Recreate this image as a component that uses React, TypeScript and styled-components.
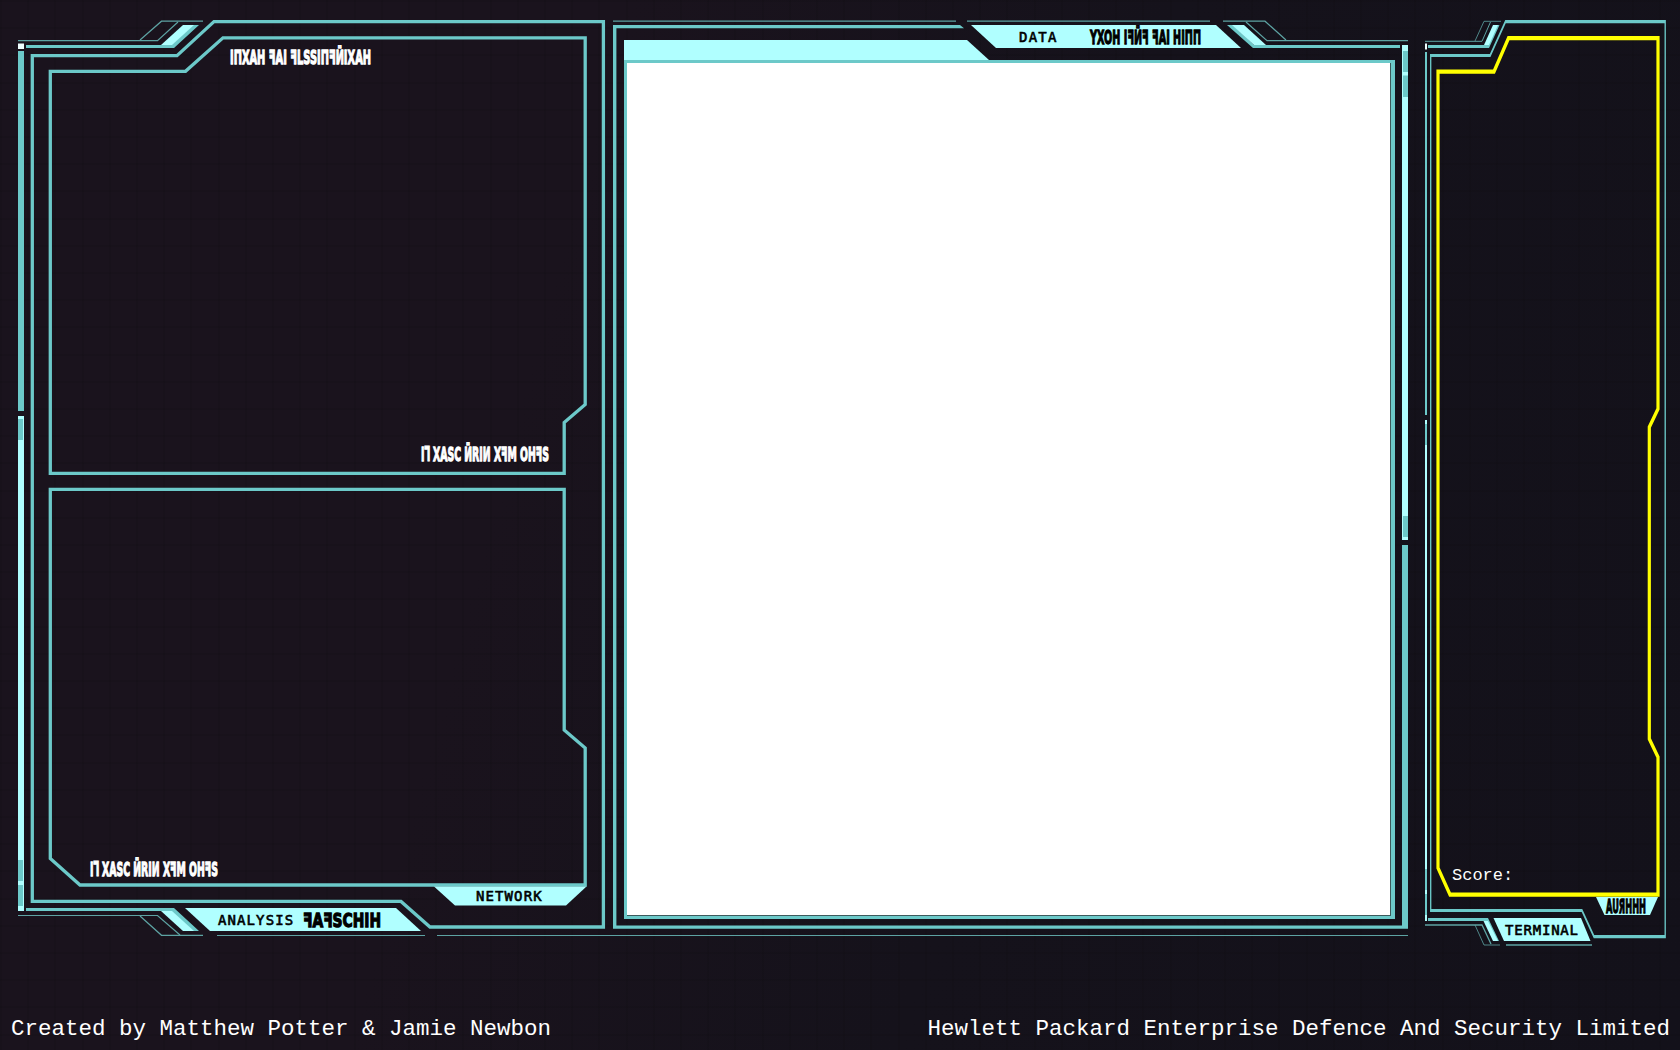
import React from "react";
import styled, { createGlobalStyle } from "styled-components";

const TEAL = "#6cc9c9";
const LIGHT = "#b0ffff";
const THIN = "#5da3a3";
const YELLOW = "#ffff00";

const GlobalStyle = createGlobalStyle`
  body {
    margin: 0;
    overflow: hidden;
    background-color: #16121b;
  }
`;

const Page = styled.div`
  display: flex;
  flex-direction: column;
  width: 1680px;
  height: 1050px;
  color: #fff;
  font-family: "Liberation Mono", monospace;
  background:
    repeating-linear-gradient(90deg, rgba(0, 0, 0, 0.07) 0 2px, transparent 2px 27.2px),
    repeating-linear-gradient(180deg, rgba(0, 0, 0, 0.07) 0 2px, transparent 2px 27.2px),
    linear-gradient(105deg, #1a131d 0%, #1a131d 32%, #15121b 60%, #13111a 100%);
`;

const Deck = styled.main`
  display: grid;
  grid-template-columns: 595px 800px 269px;
  height: 960px;
  padding-left: 16px;
`;

const Panel = styled.section`
  display: grid;
  min-width: 0;
`;

const Chrome = styled.svg`
  grid-area: 1 / 1;
  width: 100%;
  height: 960px;
  overflow: visible;
`;

const Content = styled.div<{ $top?: number }>`
  grid-area: 1 / 1;
  display: flex;
  flex-direction: column;
  align-items: flex-start;
  z-index: 1;
  padding-top: ${(p) => p.$top ?? 0}px;
`;

const UpperPane = styled.div`
  box-sizing: border-box;
  display: flex;
  flex-direction: column;
  justify-content: space-between;
  width: 100%;
  height: 482px;
  padding: 49px 62px 20px 214px;

  > :last-child {
    align-self: flex-end;
  }
`;

const LowerPane = styled.div`
  box-sizing: border-box;
  display: flex;
  align-items: flex-end;
  width: 100%;
  height: 404px;
  padding: 0 0 9px 74px;
`;

const Tab = styled.div<{ $left: number; $height: number; $top?: number; $gap?: number }>`
  display: flex;
  align-items: center;
  gap: ${(p) => p.$gap ?? 0}px;
  height: ${(p) => p.$height}px;
  margin: ${(p) => p.$top ?? 0}px 0 0 ${(p) => p.$left}px;
  color: #000;
`;

const TabLabel = styled.span<{ $width: number; $spacing: number }>`
  width: ${(p) => p.$width}px;
  white-space: nowrap;
  font: 14px/16px "DejaVu Sans Mono", monospace;
  -webkit-text-stroke: 0.6px #000;
  letter-spacing: ${(p) => p.$spacing}px;
`;

const Viewport = styled.div`
  box-sizing: border-box;
  width: 771px;
  height: 859px;
  margin: 12px 0 0 13px;
  border: 3px solid ${TEAL};
  border-right-width: 4px;
  background: #fff;
  box-shadow: inset -1px -1px 0 #3c5a5c;
`;

const Score = styled.div`
  height: 29px;
  padding: 866px 0 0 41px;
  font-size: 17px;
  line-height: 20px;
`;

const Footer = styled.footer`
  display: flex;
  justify-content: space-between;
  padding: 56px 10px 0 11px;
  font-size: 22.5px;
  line-height: 26px;
  white-space: nowrap;
`;

const GlyphBox = styled.svg`
  display: block;
  flex: none;
  overflow: visible;
  fill: currentColor;
  stroke: currentColor;
  stroke-width: 1.3px;
  font: bold 20px "DejaVu Sans", sans-serif;
`;

/* Alien script: letters squeezed to a fixed run width so that they read as solid blocks. */
function Glyphs({ text, width }: { text: string; width: number }) {
  const natural = text.length * 14.5;
  return (
    <GlyphBox width={width} height={16}>
      <text
        x={0}
        y={15.3}
        transform={`scale(${width / natural} 1)`}
        textLength={natural}
        lengthAdjust="spacingAndGlyphs"
      >
        {text}
      </text>
    </GlyphBox>
  );
}

const Line = ({ p, c = TEAL, w = 3.3, closed = false }: { p: string; c?: string; w?: number; closed?: boolean }) =>
  closed ? (
    <polygon points={p} fill="none" stroke={c} strokeWidth={w} />
  ) : (
    <polyline points={p} fill="none" stroke={c} strokeWidth={w} />
  );

const Fill = ({ p, c = LIGHT }: { p: string; c?: string }) => <polygon points={p} fill={c} />;

const Bar = ({ x, y, w, to, c = TEAL }: { x: number; y: number; w: number; to: number; c?: string }) => (
  <rect x={x} y={y} width={w} height={to - y} fill={c} />
);

/* Outline whose stroke is compressed horizontally along with the narrow panel. */
function Squeezed({ pts, k, w, c = TEAL }: { pts: number[][]; k: number; w: number; c?: string }) {
  return (
    <g transform={`scale(${k} 1)`}>
      <Line closed c={c} w={w} p={pts.map(([x, y]) => `${x / k},${y}`).join(" ")} />
    </g>
  );
}

function AnalysisPanel() {
  return (
    <Panel>
      <Chrome viewBox="16 0 595 960">
        <Line w={1.2} c={THIN} p="18,40.7 157.5,40.7 178,22" />
        <Line w={1.2} c={THIN} p="140,40 161.5,21.2 203,21.2" />
        <Fill c={TEAL} p="26,45 171,45 193,25 199,25 174,48 26,48" />
        <Fill p="161,45 183,25 194,25 172,45" />
        <Bar x={18} y={43.5} w={6} to={49} c="#efffff" />
        <Bar x={18} y={51} w={6} to={411} />
        <Bar x={18} y={416} w={6} to={911} c={LIGHT} />
        <Bar x={18} y={419} w={5} to={440} />
        <Bar x={18} y={860} w={5} to={881} />
        <Bar x={18} y={885} w={5} to={906} />
        <Line closed p="32.3,55.6 177,55.6 214,21.6 603.4,21.6 603.4,927 430,927 401,901.4 32.3,901.4" />
        <Line closed p="50.3,71.3 185.5,71.3 223,37.8 585.2,37.8 585.2,404.5 564.2,422.5 564.2,473.4 50.3,473.4" />
        <Line closed p="50.3,489.3 564.2,489.3 564.2,730 585.2,748 585.2,885 80,885 50.3,858.5" />
        <Fill p="434,886.6 586.5,886.6 566,905.5 455,905.5" />
        <Fill c={TEAL} p="26,908 174,908 199,931 191,931 170,911 26,911" />
        <Fill p="161,911 172,911 194,931 183,931" />
        <Line w={1.2} c={THIN} p="18,915.5 157.5,915.5 180,935" />
        <Line w={1.2} c={THIN} p="140,916 161.5,935.3 203,935.3" />
        <Fill p="185,908 396,908 421,931 210,931" />
        <Line w={1.2} c={THIN} p="217,935.5 425,935.5" />
      </Chrome>
      <Content>
        <UpperPane>
          <Glyphs text="IПXAH ꟻAI ꟻLSSIПꟻӤIXAH" width={141} />
          <Glyphs text="I⅂ XASC ӤRIИ XꟻM OHꟻS" width={128} />
        </UpperPane>
        <LowerPane>
          <Glyphs text="I⅂ XASC ӤRIИ XꟻM OHꟻS" width={128} />
        </LowerPane>
        <Tab $left={460} $height={20}>
          <TabLabel $width={66} $spacing={1.1}>NETWORK</TabLabel>
        </Tab>
        <Tab $left={202} $height={23} $top={2} $gap={10}>
          <TabLabel $width={75} $spacing={1.1}>ANALYSIS</TabLabel>
          <Glyphs text="ꟻAꟻSCHIH" width={78} />
        </Tab>
      </Content>
    </Panel>
  );
}

function DataPanel() {
  return (
    <Panel>
      <Chrome viewBox="611 0 800 960">
        <Line w={1.2} c={THIN} p="613,21.2 956,21.2" />
        <Line w={1.2} c={THIN} p="967,21.2 1210,21.2" />
        <Line w={1.2} c={THIN} p="1223,21.2 1265,21.2 1286,40" />
        <Line w={1.2} c={THIN} p="1246,22 1267,40.7 1408,40.7" />
        <Line w={1.2} c={THIN} p="437,935.5 1408,935.5" />
        <Fill c={TEAL} p="613,25 960,25 964,28.3 616.4,28.3 616.4,925.4 1402,925.4 1402,545 1408,545 1408,928.7 613,928.7" />
        <Fill p="624,40 967,40 989,60 624,60" />
        <Fill p="971,25 1216,25 1241,48 996,48" />
        <Fill c={TEAL} p="1227,25 1233,25 1254,45 1400,45 1400,48 1253,48" />
        <Fill p="1232,25 1244,25 1266,45 1254,45" />
        <Bar x={1402} y={45} w={6} to={540} c={LIGHT} />
        <Bar x={1403} y={51} w={5} to={72} />
        <Bar x={1403} y={75.5} w={5} to={97} />
        <Bar x={1403} y={516} w={5} to={537} />
      </Chrome>
      <Content $top={25}>
        <Tab $left={408} $height={23} $gap={33}>
          <TabLabel $width={38} $spacing={1.2}>DATA</TabLabel>
          <Glyphs text="YXOH IꟻӤꟻ ꟻAI HIПП" width={111} />
        </Tab>
        <Viewport />
      </Content>
    </Panel>
  );
}

function TerminalPanel() {
  return (
    <Panel>
      <Chrome viewBox="1411 0 269 960">
        <Line w={1} c={THIN} p="1425,41.3 1482,41.3 1490.5,22" />
        <Line w={0.8} c={THIN} p="1475,41 1484,21.3 1501,21.3" />
        <Fill c={TEAL} p="1428,45 1488,45 1497,25 1499.5,25 1489,48 1428,48" />
        <Fill p="1484,45 1493,25 1498,25 1489,45" />
        <Bar x={1425} y={43.5} w={2} to={49.5} c="#efffff" />
        <Bar x={1425} y={52} w={2} to={415} />
        <Bar x={1425} y={420} w={2} to={921} c={LIGHT} />
        <Bar x={1425} y={424} w={2} to={445} />
        <Bar x={1425} y={869} w={2} to={890} />
        <Bar x={1425} y={894} w={2} to={915} />
        <Squeezed
          k={0.42}
          w={3.2}
          pts={[[1430.7, 55.5], [1490.2, 55.5], [1505.5, 21.7], [1665.2, 21.7], [1665.2, 936.7], [1594, 936.7], [1582, 910.5], [1430.7, 910.5]]}
        />
        <Squeezed
          k={0.76}
          w={4.2}
          c={YELLOW}
          pts={[[1438, 71.6], [1494, 71.6], [1508.5, 38.2], [1658, 38.2], [1658, 409], [1649.3, 427], [1649.3, 739], [1658, 757], [1658, 894.6], [1450, 894.6], [1438, 868]]}
        />
        <Fill p="1596,897 1658,897 1650,915 1604.5,915" />
        <Fill c={TEAL} p="1428,918 1488,918 1499,941 1496,941 1487,921 1428,921" />
        <Fill p="1483.5,921 1488,921 1498,941 1493,941" />
        <Fill p="1493.5,918 1581,918 1590.5,941 1504,941" />
        <Line w={1.3} c={THIN} p="1425,925 1482,925 1491,944" />
        <Line w={0.8} c={THIN} p="1475,925 1484,945 1500,945" />
        <Line w={1.6} c={THIN} p="1506,945 1592,945" />
      </Chrome>
      <Content>
        <Score>Score:</Score>
        <Tab $left={195} $height={16} $top={3}>
          <Glyphs text="AUЯHHH" width={40} />
        </Tab>
        <Tab $left={94} $height={23} $top={4}>
          <TabLabel $width={75} $spacing={0.8}>TERMINAL</TabLabel>
        </Tab>
      </Content>
    </Panel>
  );
}

export default function App() {
  return (
    <>
      <GlobalStyle />
      <Page>
        <Deck>
          <AnalysisPanel />
          <DataPanel />
          <TerminalPanel />
        </Deck>
        <Footer>
          <span>Created by Matthew Potter &amp; Jamie Newbon</span>
          <span>Hewlett Packard Enterprise Defence And Security Limited</span>
        </Footer>
      </Page>
    </>
  );
}
